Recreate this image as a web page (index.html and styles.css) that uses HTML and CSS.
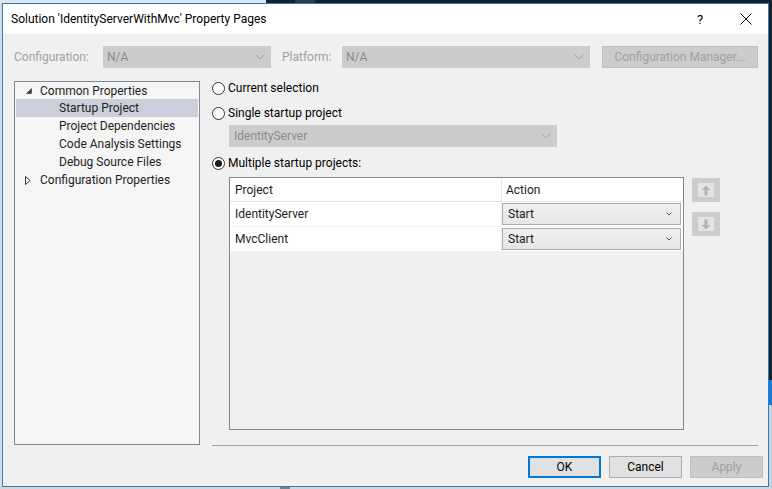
FILE: index.html
```html
<!DOCTYPE html>
<html>
<head>
<meta charset="utf-8">
<link rel="stylesheet" href="styles.css">
</head>
<body>
<div class="screen">
  <div class="edge-top"></div>
  <div class="middle">
    <div class="edge-left"></div>
    <div class="dialog">
      <div class="titlebar">
        <span class="title">Solution 'IdentityServerWithMvc' Property Pages</span>
        <span class="help">?</span>
        <svg class="close" width="12" height="12" viewBox="0 0 12 12"><path d="M0.5 0.5 L11.5 11.5 M11.5 0.5 L0.5 11.5" stroke="#000" stroke-width="1" fill="none"/></svg>
      </div>
      <div class="content">
        <div class="config-row">
          <span class="cfg-label">Configuration:</span>
          <div class="combo combo-config"><span>N/A</span><svg class="chev" width="10" height="6" viewBox="0 0 10 6"><path d="M0.5 0.5 L5 5 L9.5 0.5" stroke="#a8a8a8" fill="none"/></svg></div>
          <span class="cfg-label plat-label">Platform:</span>
          <div class="combo combo-platform"><span>N/A</span><svg class="chev" width="10" height="6" viewBox="0 0 10 6"><path d="M0.5 0.5 L5 5 L9.5 0.5" stroke="#a8a8a8" fill="none"/></svg></div>
          <div class="btn-cfgmgr">Configuration Manager...</div>
        </div>
        <div class="main">
          <div class="tree">
            <div class="node lvl0 first"><svg class="tri" width="6" height="6" viewBox="0 0 6 6"><path d="M5.5 0.5 L5.5 5.5 L0.5 5.5 Z" fill="#3c3c3c" stroke="#3c3c3c" stroke-width="0.6"/></svg><span>Common Properties</span></div>
            <div class="node lvl1 selected"><span>Startup Project</span></div>
            <div class="node lvl1"><span>Project Dependencies</span></div>
            <div class="node lvl1"><span>Code Analysis Settings</span></div>
            <div class="node lvl1"><span>Debug Source Files</span></div>
            <div class="node lvl0"><svg class="tri tri-closed" width="6" height="9" viewBox="0 0 6 9"><path d="M0.5 0.5 L5.2 4.5 L0.5 8.5 Z" fill="none" stroke="#3c3c3c" stroke-width="1"/></svg><span>Configuration Properties</span></div>
          </div>
          <div class="panel">
            <div class="radio-row r1"><span class="radio"></span><span>Current selection</span></div>
            <div class="radio-row r2"><span class="radio"></span><span>Single startup project</span></div>
            <div class="combo combo-single"><span>IdentityServer</span><svg class="chev" width="10" height="6" viewBox="0 0 10 6"><path d="M0.5 0.5 L5 5 L9.5 0.5" stroke="#a8a8a8" fill="none"/></svg></div>
            <div class="radio-row r3"><span class="radio checked"></span><span>Multiple startup projects:</span></div>
            <div class="list-area">
              <div class="list">
                <div class="lrow header"><div class="c1">Project</div><div class="c2">Action</div></div>
                <div class="lrow"><div class="c1">IdentityServer</div><div class="c2"><div class="action-combo"><span>Start</span><svg width="6" height="4" viewBox="0 0 6 4"><path d="M0.5 0.5 L3 3 L5.5 0.5" stroke="#555" fill="none"/></svg></div></div></div>
                <div class="lrow"><div class="c1">MvcClient</div><div class="c2"><div class="action-combo"><span>Start</span><svg width="6" height="4" viewBox="0 0 6 4"><path d="M0.5 0.5 L3 3 L5.5 0.5" stroke="#555" fill="none"/></svg></div></div></div>
              </div>
              <div class="movers">
                <div class="mover"><div class="mover-inner"><svg width="10" height="11" viewBox="0 0 10 11"><path d="M5 0.5 L9.5 5 L6.5 5 L6.5 10.5 L3.5 10.5 L3.5 5 L0.5 5 Z" fill="#b4b4b4"/></svg></div></div>
                <div class="mover"><div class="mover-inner"><svg width="10" height="11" viewBox="0 0 10 11"><path d="M5 10.5 L9.5 6 L6.5 6 L6.5 0.5 L3.5 0.5 L3.5 6 L0.5 6 Z" fill="#b4b4b4"/></svg></div></div>
              </div>
            </div>
            <div class="separator"></div>
          </div>
        </div>
        <div class="footer">
          <div class="btn btn-ok">OK</div>
          <div class="btn">Cancel</div>
          <div class="btn btn-disabled">Apply</div>
        </div>
      </div>
    </div>
    <div class="edge-right"></div>
  </div>
  <div class="edge-bottom"></div>
</div>
</body>
</html>
```
FILE: styles.css
```css
* { box-sizing: border-box; }
html, body { margin: 0; padding: 0; }
body {
  width: 772px;
  height: 489px;
  overflow: hidden;
  background: #e6e6e6;
  font-family: Roboto, "Noto Sans", sans-serif;
  font-size: 12px;
  color: #1b1b1b;
}
.screen { display: flex; flex-direction: column; width: 772px; height: 489px; }
.edge-top {
  height: 3px;
  background: linear-gradient(to right, #e4e4e4 0, #e4e4e4 266px, #1f1f1f 266px, #1f1f1f 295px, #3a3a3a 295px, #3a3a3a 315px, #1f1f1f 315px);
}
.middle { display: flex; height: 484px; }
.edge-left { width: 2px; background: #dcdcdc; }
.edge-right {
  width: 3px;
  background: linear-gradient(to bottom, #1e1e1e 0, #1e1e1e 377px, #1c7ad0 377px, #1c7ad0 402px, #d0d0d0 402px);
}
.edge-bottom {
  height: 2px;
  background: linear-gradient(to right, #d6d6d6 0, #d6d6d6 280px, #808080 280px, #808080 290px, #d6d6d6 290px);
}
.dialog {
  width: 767px;
  height: 484px;
  border: 1px solid #1883d7;
  display: flex;
  flex-direction: column;
  background: #f0f0f0;
}
.titlebar {
  height: 30px;
  background: #fff;
  display: flex;
  align-items: center;
  padding-left: 8px;
}
.title { flex: 1; color: #000; padding-bottom: 1px; }
.help { width: 10px; color: #000; margin-right: 33px; font-size: 13px; }
.close { margin-right: 16px; }
.content { flex: 1; display: flex; flex-direction: column; }

.config-row {
  display: flex;
  align-items: center;
  height: 22px;
  margin-top: 12px;
  padding-left: 11px;
}
.cfg-label { flex: 0 0 89px; color: #a0a0a0; white-space: nowrap; }
.plat-label { flex-basis: 60px; margin-left: 11px; }
.combo {
  flex-shrink: 0;
  height: 22px;
  background: #cccccc;
  border: 1px solid #cccccc;
  display: flex;
  align-items: center;
  justify-content: space-between;
  padding: 0 5px 0 3px;
  color: #8a8a8a;
}
.combo-config { width: 168px; }
.combo-platform { width: 248px; }
.btn-cfgmgr {
  flex-shrink: 0;
  margin-left: 12px;
  width: 156px;
  height: 22px;
  background: #cccccc;
  border: 1px solid #bfbfbf;
  color: #a0a0a0;
  display: flex;
  align-items: center;
  justify-content: center;
}
.main {
  display: flex;
  align-items: flex-start;
  margin-top: 13px;
  padding-left: 11px;
}
.tree {
  width: 186px;
  height: 364px;
  border: 1px solid #828790;
  background: #f5f5f5;
  padding: 0 1px;
}
.node {
  height: 18px;
  display: flex;
  align-items: center;
  color: #1e1e1e;
}
.node.first { height: 17px; }
.node.lvl0 { padding-left: 10px; }
.node.lvl0 .tri { margin-right: 8px; }
.node.lvl0 .tri-closed { margin-left: -1px; margin-right: 9px; }
.node.lvl1 { padding-left: 43px; }
.node.selected { background: #cccedb; }

.panel {
  width: 546px;
  margin-left: 12px;
  display: flex;
  flex-direction: column;
}
.radio-row { display: flex; align-items: center; height: 14px; color: #000; }
.r1 { margin-top: 0; }
.r2 { margin-top: 11px; }
.r3 { margin-top: 9px; }
.radio {
  width: 13px;
  height: 13px;
  border-radius: 50%;
  border: 1px solid #333;
  background: #fff;
  margin-right: 3px;
  display: flex;
  align-items: center;
  justify-content: center;
}
.radio.checked::after {
  content: "";
  width: 7px;
  height: 7px;
  border-radius: 50%;
  background: #1a1a1a;
}
.combo-single {
  margin-top: 5px;
  margin-left: 17px;
  width: 328px;
  padding-left: 4px;
}
.list-area {
  display: flex;
  align-items: flex-start;
  margin-top: 7px;
  margin-left: 17px;
}
.list {
  width: 455px;
  height: 253px;
  border: 1px solid #828790;
  background: #f0f0f0;
}
.lrow {
  display: flex;
  height: 25px;
  background: #fff;
  border-bottom: 1px solid #f0f0f0;
}
.lrow.header { height: 24px; border-bottom: 1px solid #e5e5e5; }
.c1 {
  width: 272px;
  padding-left: 5px;
  display: flex;
  align-items: center;
  border-right: 1px solid #f0f0f0;
}
.header .c1 { border-right: 1px solid #e5e5e5; }
.c2 { flex: 1; display: flex; align-items: center; padding-left: 4px; }
.lrow:not(.header) .c2 { padding: 0 1px 1px 0; }
.action-combo {
  width: 179px;
  height: 22px;
  border: 1px solid #acacac;
  background: linear-gradient(to bottom, #f0f0f0, #e5e5e5);
  display: flex;
  align-items: center;
  justify-content: space-between;
  padding: 0 8px 0 5px;
}
.movers { margin-left: 8px; margin-top: 1px; display: flex; flex-direction: column; gap: 10px; }
.mover {
  width: 28px;
  height: 24px;
  background: #cccccc;
  padding: 5px 6px;
}
.mover-inner {
  width: 16px;
  height: 14px;
  background: #e3e3e3;
  display: flex;
  align-items: center;
  justify-content: center;
}
.separator {
  margin-top: 15px;
  height: 1px;
  background: #a0a0a0;
}
.footer {
  display: flex;
  justify-content: flex-end;
  gap: 8px;
  margin-top: 10px;
  padding-right: 5px;
}
.btn {
  width: 73px;
  height: 22px;
  background: #e1e1e1;
  border: 1px solid #adadad;
  display: flex;
  align-items: center;
  justify-content: center;
  color: #000;
}
.btn-ok { border: 2px solid #0078d7; }
.btn-disabled { background: #cccccc; border-color: #bfbfbf; color: #a0a0a0; }
```
